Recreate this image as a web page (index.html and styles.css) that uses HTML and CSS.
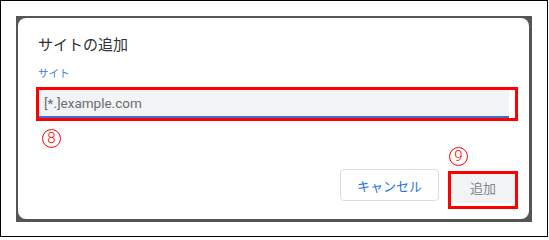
FILE: index.html
```html
<!DOCTYPE html>
<html lang="ja">
<head>
<meta charset="utf-8">
<link rel="stylesheet" href="styles.css">
</head>
<body>
<div class="frame">
  <div class="backdrop">
    <div class="dialog">
      <div class="title">サイトの追加</div>
      <div class="label">サイト</div>
      <div class="input"><span class="placeholder">[*.]example.com</span></div>
      <div class="actions">
        <div class="btn cancel">キャンセル</div>
        <div class="btn add">追加</div>
      </div>
      <div class="mark mark-input"></div>
      <div class="mark mark-add"></div>
      <span class="num num-8">8</span>
      <span class="num num-9">9</span>
    </div>
  </div>
</div>
</body>
</html>
```

FILE: styles.css
```css
html, body {
  margin: 0;
  padding: 0;
  background: #fff;
}
.frame {
  width: 548px;
  height: 237px;
  box-sizing: border-box;
  border: 1px solid #000;
  padding: 15px 0 0 15px;
}
.backdrop {
  width: 516px;
  height: 206px;
  box-sizing: border-box;
  background: #555555;
  padding: 2px 3px 3px 2px;
}
.dialog {
  position: relative;
  height: 100%;
  box-sizing: border-box;
  background: #fff;
  border-radius: 8px;
  padding: 16px 14px 16px 20px;
  display: flex;
  flex-direction: column;
  font-family: Roboto, "Noto Sans CJK JP", sans-serif;
}
.title {
  font-family: "Noto Sans CJK JP", sans-serif;
  font-size: 15px;
  line-height: 20px;
  color: #303134;
}
.label {
  margin-top: 12px;
  font-family: "Noto Sans CJK JP", sans-serif;
  font-size: 10.5px;
  line-height: 14px;
  color: #3b7be0;
}
.input {
  margin-top: 8px;
  margin-right: 6px;
  height: 30px;
  box-sizing: border-box;
  background: #f1f3f4;
  border-bottom: 2px solid #3b73d3;
  border-radius: 4px 4px 0 0;
  display: flex;
  align-items: center;
  padding: 2px 6px 0 6px;
}
.placeholder {
  font-family: Roboto, sans-serif;
  font-size: 13.5px;
  color: #6a6e73;
}
.actions {
  margin-top: auto;
  display: flex;
  justify-content: flex-end;
  gap: 12px;
}
.btn {
  height: 32px;
  box-sizing: border-box;
  border-radius: 4px;
  display: flex;
  align-items: center;
  justify-content: center;
  font-family: "Noto Sans CJK JP", sans-serif;
  font-size: 13px;
}
.cancel {
  width: 99px;
  border: 1px solid #dadce0;
  color: #1a73e8;
}
.add {
  width: 64px;
  margin-top: 2px;
  background: #f1f3f4;
  color: #80868b;
}
.mark {
  position: absolute;
  box-sizing: border-box;
  border: 3px solid #ff0000;
}
.mark-input {
  left: 18px;
  top: 69px;
  width: 482px;
  height: 34px;
}
.mark-add {
  left: 430px;
  top: 153px;
  width: 70px;
  height: 38px;
}
.num {
  position: absolute;
  width: 19px;
  height: 19px;
  box-sizing: border-box;
  border: 1px solid #ff0000;
  border-radius: 50%;
  display: flex;
  align-items: center;
  justify-content: center;
  font-family: Roboto, sans-serif;
  font-weight: 300;
  font-size: 15px;
  line-height: 1;
  color: #ff0000;
}
.num-8 {
  left: 24px;
  top: 111px;
}
.num-9 {
  left: 431px;
  top: 129px;
}
```
